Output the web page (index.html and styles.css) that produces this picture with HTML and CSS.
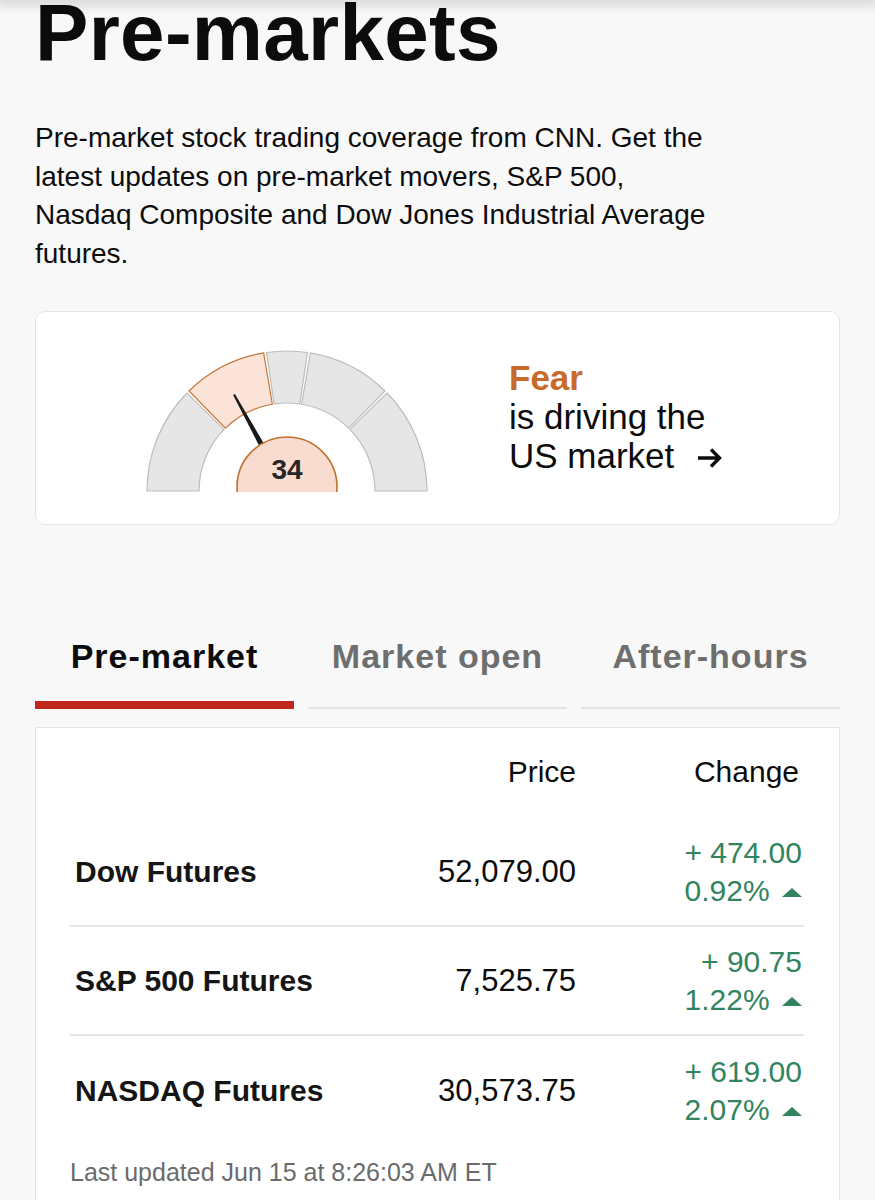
FILE: index.html
```html
<html>
  <head>
    <link rel="stylesheet" href="styles.css">
  </head>
  <body>
    <div class="topbar"></div>
    <div id="page">
      <h1 class="title">Pre-markets</h1>
      <p class="intro">Pre-market stock trading coverage from CNN. Get the latest updates on pre-market movers, S&amp;P 500, Nasdaq Composite and Dow Jones Industrial Average futures.</p>

      <!-- fear & greed card -->
      <div class="fg-card">
        <svg class="gauge" width="290" height="143" viewBox="0 0 290 143">
          <path class="seg" d="M5,142 A140,140 0 0 1 44.97,44.04 L82.12,80.43 A88,88 0 0 0 57,142 Z"/>
          <path class="seg active" d="M47.04,41.97 A140,140 0 0 1 121.65,3.96 L130.32,55.23 A88,88 0 0 0 83.43,79.12 Z"/>
          <path class="seg" d="M124.55,3.5 A140,140 0 0 1 165.45,3.5 L157.86,54.94 A88,88 0 0 0 132.14,54.94 Z"/>
          <path class="seg" d="M168.35,3.96 A140,140 0 0 1 242.96,41.97 L206.57,79.12 A88,88 0 0 0 159.68,55.23 Z"/>
          <path class="seg" d="M245.03,44.04 A140,140 0 0 1 285,142 L233,142 A88,88 0 0 0 207.88,80.43 Z"/>
          <polygon class="needle" points="92.9,45.1 128.3,105.5 123.2,108.4 91.1,46.1"/>
          <circle class="dial" cx="145" cy="138" r="50"/>
          <text class="score" x="145" y="130">34</text>
        </svg>
        <div class="fg-text">
          <div class="fg-label">Fear</div>
          <div>is driving the</div>
          <div>US market
            <svg class="arrow" width="28" height="24" viewBox="0 0 28 24">
              <path d="M2 12 H24 M15 3.5 L23.5 12 L15 20.5" fill="none" stroke="#0c0c0c" stroke-width="3.4"/>
            </svg>
          </div>
        </div>
      </div>

      <!-- tabs -->
      <div class="tabs">
        <div class="tab on"><span>Pre-market</span><div class="line"></div></div>
        <div class="tab"><span>Market open</span><div class="line"></div></div>
        <div class="tab"><span>After-hours</span><div class="line"></div></div>
      </div>

      <div class="quotes">
        <div class="thead">
          <div></div>
          <div class="num">Price</div>
          <div class="num chg-h">Change</div>
        </div>
        <div class="row">
          <div class="name">Dow Futures</div>
          <div class="num price">52,079.00</div>
          <div class="num chg">+ 474.00<br>0.92% <span class="up"></span></div>
        </div>
        <div class="row">
          <div class="name">S&amp;P 500 Futures</div>
          <div class="num price">7,525.75</div>
          <div class="num chg">+ 90.75<br>1.22% <span class="up"></span></div>
        </div>
        <div class="row last">
          <div class="name">NASDAQ Futures</div>
          <div class="num price">30,573.75</div>
          <div class="num chg">+ 619.00<br>2.07% <span class="up"></span></div>
        </div>
        <div class="updated">Last updated Jun 15 at 8:26:03 AM ET</div>
      </div>
    </div>
  </body>
</html>
```

FILE: styles.css
```css
body {
  margin: 0;
  background: #f8f8f8;
  color: #0c0c0c;
  font-family: "Liberation Sans", Arial, sans-serif;
}
.topbar {
  height: 0;
  position: relative;
  z-index: 2;
  box-shadow: 0 0 12px 5px rgba(0,0,0,0.16);
}
#page {
  padding: 0 35px;
}

/* HEADER ======================================= */
.title {
  margin: 0;
  font-size: 80px;
  line-height: 66px;
  font-weight: bold;
  letter-spacing: 0.3px;
}
.intro {
  margin: 53px 0 0;
  width: 690px;
  font-size: 28px;
  line-height: 38.5px;
}

/* FEAR & GREED CARD ============================ */
.fg-card {
  margin-top: 38px;
  height: 214px;
  box-sizing: border-box;
  background: #fff;
  border: 1px solid #e6e6e6;
  border-radius: 10px;
  display: flex;
  align-items: center;
  padding: 4px 0 0 106px;
}
.gauge { display: block; }
.seg {
  fill: #e6e6e6;
  stroke: #bdbdbd;
  stroke-width: 1.2;
}
.seg.active {
  fill: #fbe3d8;
  stroke: #c67434;
}
.needle { fill: #1a1a1a; }
.dial {
  fill: #f9dccf;
  stroke: #c0712e;
  stroke-width: 1.6;
}
.score {
  font-family: "Liberation Sans", Arial, sans-serif;
  font-weight: bold;
  font-size: 28px;
  fill: #262626;
  text-anchor: middle;
}
.fg-text {
  margin: -7px 0 0 77px;
  font-size: 35px;
  line-height: 39px;
}
.fg-label {
  color: #c96a2b;
  font-weight: bold;
}
.arrow {
  margin-left: 12px;
  vertical-align: -2px;
}

/* TABS ========================================= */
.tabs {
  margin-top: 111px;
  display: grid;
  grid-template-columns: 1fr 1fr 1fr;
  column-gap: 14px;
  align-items: end;
}
.tab {
  text-align: center;
  font-size: 34px;
  line-height: 40px;
  font-weight: bold;
  letter-spacing: 1px;
  color: #6e6e6e;
}
.tab span { display: block; padding-bottom: 31px; }
.tab .line {
  height: 2px;
  background: #e4e4e4;
}
.tab.on { color: #0c0c0c; }
.tab.on span { padding-bottom: 25px; }
.tab.on .line {
  height: 8px;
  background: #c1261c;
}

/* QUOTES TABLE ================================= */
.quotes {
  margin-top: 18px;
  background: #fff;
  border: 1px solid #e6e6e6;
  border-bottom: none;
  padding: 25px 35px 30px 34px;
}
.thead, .row {
  display: grid;
  grid-template-columns: 1fr 168px 228px;
  align-items: center;
}
.thead {
  font-size: 30px;
  line-height: 38px;
  padding-bottom: 27px;
}
.num { text-align: right; }
.chg-h { padding-right: 5px; }
.row {
  height: 109px;
  box-sizing: border-box;
  border-bottom: 2px solid #e6e6e6;
}
.row.last { border-bottom: none; }
.name {
  padding-left: 5px;
  font-size: 30px;
  font-weight: bold;
  color: #151515;
}
.price {
  font-size: 31px;
}
.chg {
  padding-right: 2px;
  font-size: 30px;
  line-height: 38px;
  color: #32845e;
}
.up {
  display: inline-block;
  width: 0;
  height: 0;
  margin-left: 4px;
  border-left: 10.5px solid transparent;
  border-right: 10.5px solid transparent;
  border-bottom: 9px solid #32845e;
  vertical-align: 4px;
}
.updated {
  margin-top: 12px;
  font-size: 25px;
  line-height: 30px;
  color: #6b6b6b;
}
```
